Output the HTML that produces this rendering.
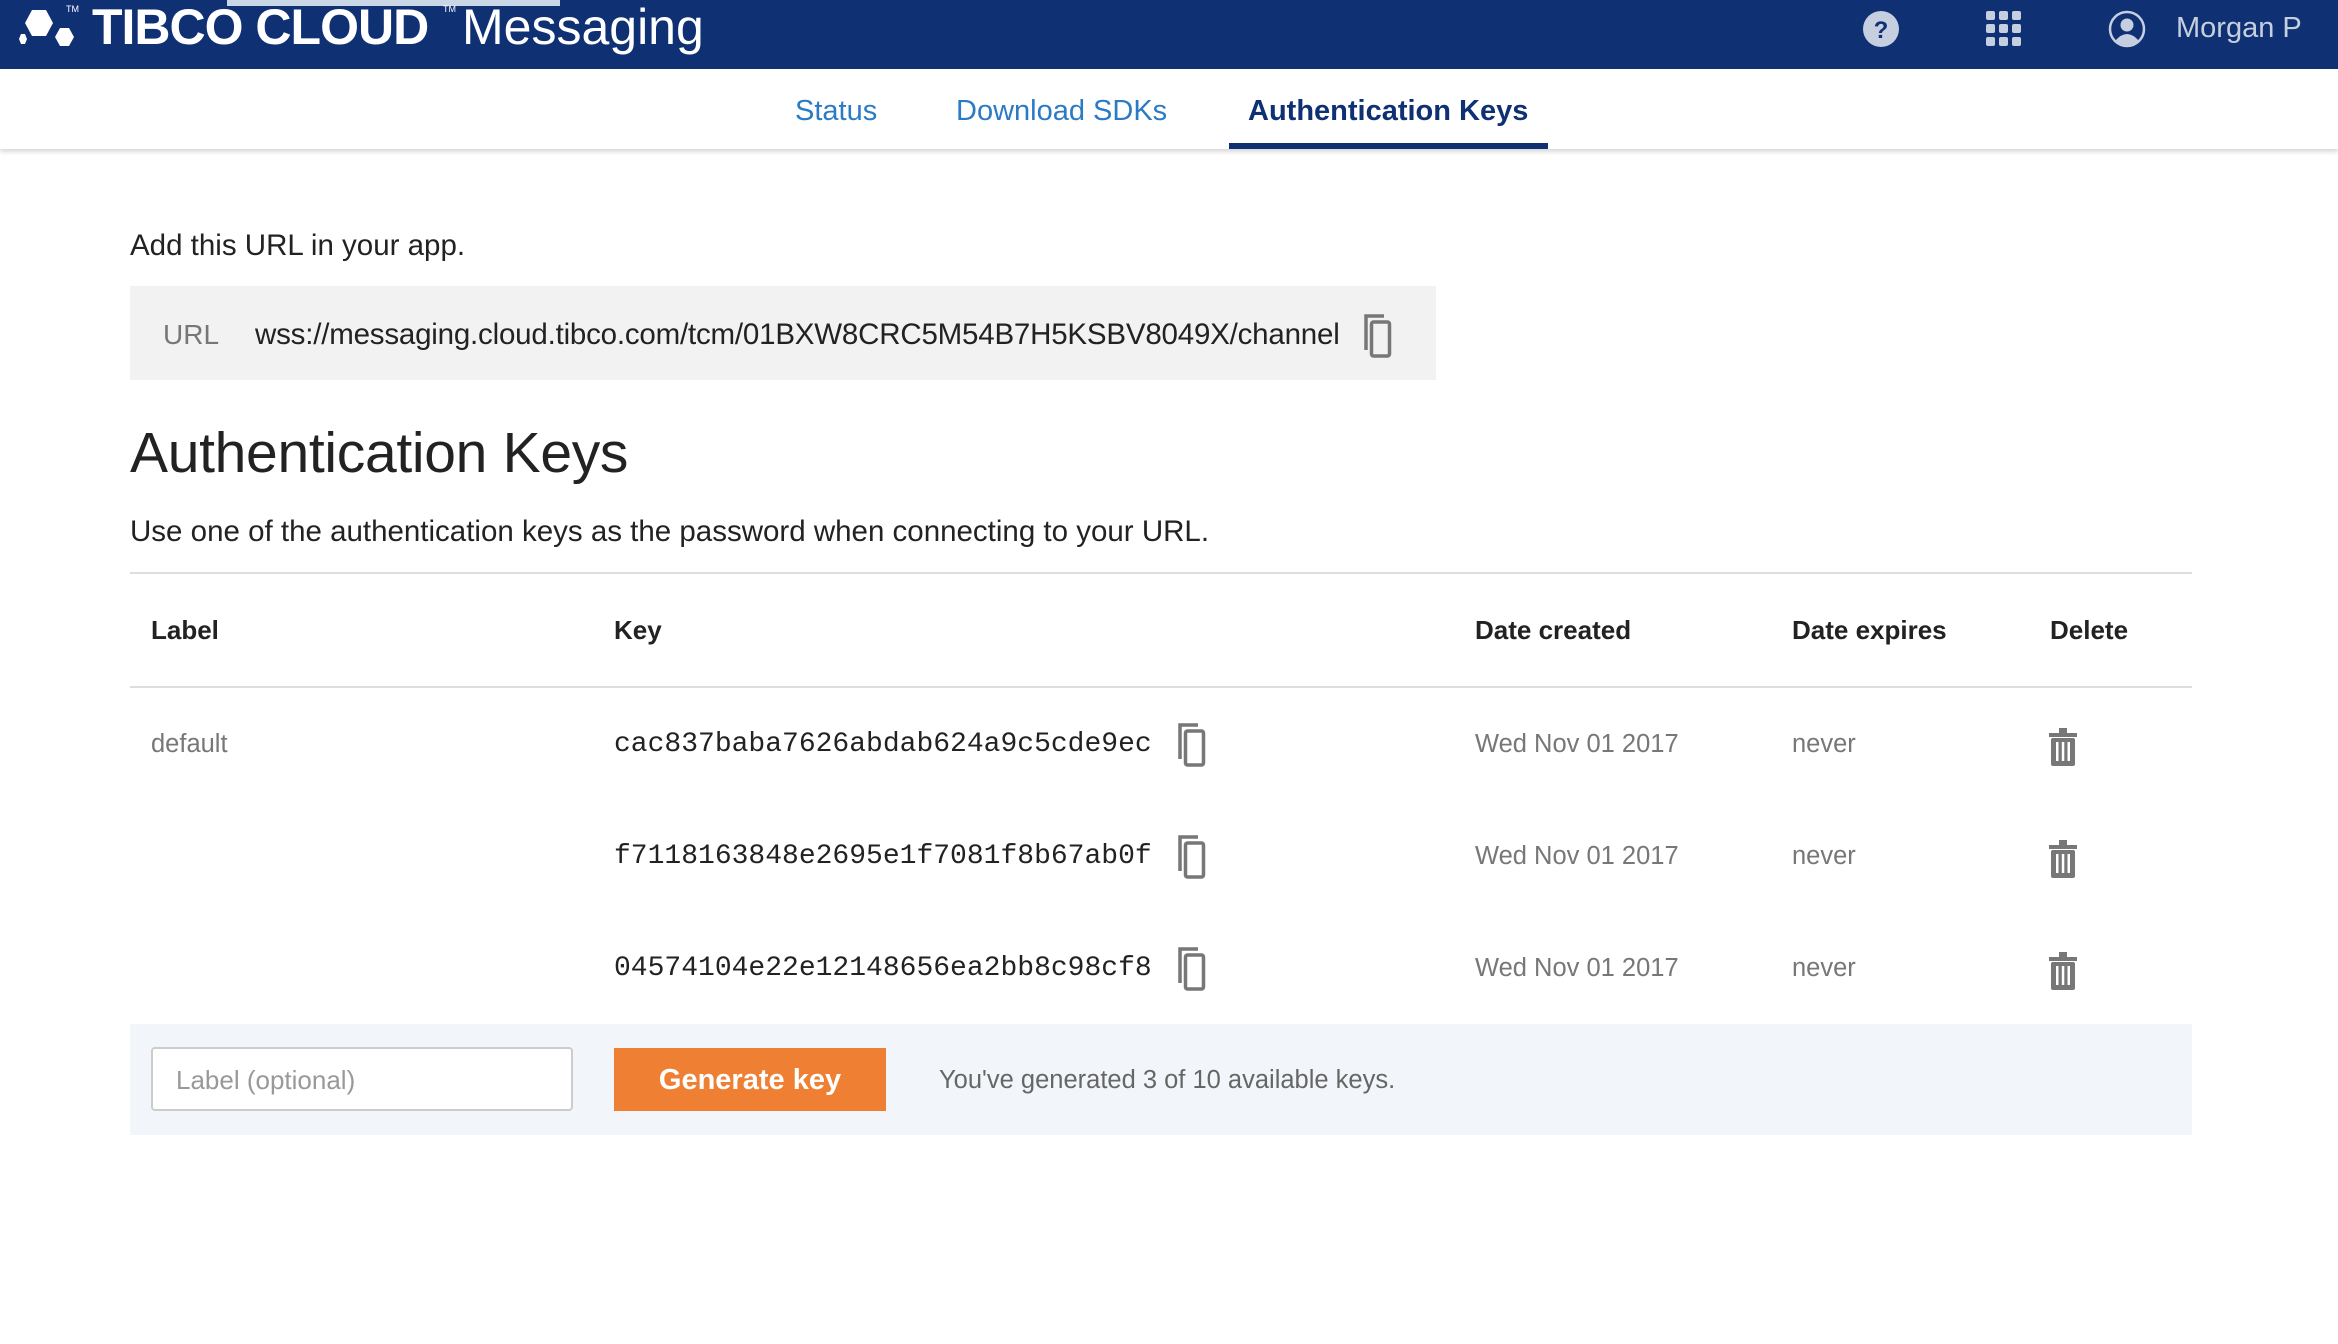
<!DOCTYPE html>
<html><head><meta charset="utf-8"><style>
*{margin:0;padding:0;box-sizing:border-box}
body{width:2338px;height:1344px;background:#fff;font-family:"Liberation Sans",sans-serif;position:relative;overflow:hidden;color:#222}
.a{position:absolute;white-space:nowrap}
.hdr{position:absolute;left:0;top:0;width:2338px;height:69px;background:#0f3174}
.tabs{position:absolute;left:0;top:69px;width:2338px;height:80px;background:#fff;box-shadow:0 3px 4px rgba(0,0,0,.15)}
.tab{font-size:29px;color:#2a7bc4;top:95px}
.mono{font-family:"Liberation Mono",monospace;font-size:28px;color:#222}
.g{color:#777;font-size:25.5px}
.th{font-size:26px;font-weight:bold;color:#222;top:615px}
</style></head><body>
<div class="hdr"></div>
<div class="a" style="left:227px;top:0;width:333px;height:6px;background:#c9d6e6"></div>
<svg class="a" style="left:14px;top:8px" width="70" height="42" viewBox="0 0 70 42">
<polygon points="18,2 32,2 39,15 32,28 18,28 11,15" fill="#fff"/>
<polygon points="46,20 55,20 60,29 55,38 46,38 41,29" fill="#fff"/>
<polygon points="7,26 11,26 13,31 11,36 7,36 5,31" fill="#fff"/>
</svg>
<div class="a" style="left:92px;top:-2px;font-size:50px;color:#fff;font-weight:bold;letter-spacing:-1px">TIBCO CLOUD</div>
<div class="a" style="left:462px;top:-2px;font-size:50px;color:#fff">Messaging</div>
<div class="a" style="left:66px;top:4px;font-size:9px;color:#fff">TM</div>
<div class="a" style="left:443px;top:4px;font-size:9px;color:#fff">TM</div>
<svg class="a" style="left:1862px;top:10px" width="38" height="38"><circle cx="19" cy="19" r="18" fill="#c5cfdf"/><text x="19" y="28" text-anchor="middle" font-family="Liberation Sans" font-weight="bold" font-size="24" fill="#0f3174">?</text></svg>
<svg class="a" style="left:1985px;top:10px" width="38" height="38" fill="#c5cfdf">
<rect x="1" y="1" width="9" height="9" rx="2"/><rect x="14" y="1" width="9" height="9" rx="2"/><rect x="27" y="1" width="9" height="9" rx="2"/>
<rect x="1" y="14" width="9" height="9" rx="2"/><rect x="14" y="14" width="9" height="9" rx="2"/><rect x="27" y="14" width="9" height="9" rx="2"/>
<rect x="1" y="27" width="9" height="9" rx="2"/><rect x="14" y="27" width="9" height="9" rx="2"/><rect x="27" y="27" width="9" height="9" rx="2"/></svg>
<svg class="a" style="left:2107px;top:9px" width="40" height="40"><circle cx="20" cy="20" r="17" fill="none" stroke="#c5cfdf" stroke-width="2.5"/><circle cx="20" cy="16" r="6.5" fill="#c5cfdf"/><path d="M8 32 Q20 18 32 32 Q20 40 8 32Z" fill="#c5cfdf"/></svg>
<div class="a" style="left:2176px;top:12px;font-size:29px;color:#c5cfdf">Morgan P</div>

<div class="tabs"></div>
<div class="a tab" style="left:795px">Status</div>
<div class="a tab" style="left:956px">Download SDKs</div>
<div class="a tab" style="left:1248px;color:#0f3174;font-weight:bold">Authentication Keys</div>
<div class="a" style="left:1229px;top:143px;width:319px;height:6px;background:#0f3174"></div>

<div class="a" style="left:130px;top:229px;font-size:29.5px;color:#222">Add this URL in your app.</div>
<div class="a" style="left:130px;top:286px;width:1306px;height:94px;background:#f2f2f2"></div>
<div class="a" style="left:163px;top:319px;font-size:28px;color:#777">URL</div>
<div class="a" style="left:255px;top:318px;font-size:29.5px;color:#222;letter-spacing:-0.2px">wss://messaging.cloud.tibco.com/tcm/01BXW8CRC5M54B7H5KSBV8049X/channel</div>

<div class="a" style="left:130px;top:420px;font-size:57px;color:#222;letter-spacing:-0.3px">Authentication Keys</div>
<div class="a" style="left:130px;top:515px;font-size:29.5px;color:#222">Use one of the authentication keys as the password when connecting to your URL.</div>
<div class="a" style="left:130px;top:572px;width:2062px;height:2px;background:#ddd"></div>
<div class="a th" style="left:151px">Label</div>
<div class="a th" style="left:614px">Key</div>
<div class="a th" style="left:1475px">Date created</div>
<div class="a th" style="left:1792px">Date expires</div>
<div class="a th" style="left:2050px">Delete</div>
<div class="a" style="left:130px;top:686px;width:2062px;height:2px;background:#ddd"></div>

<div class="a g" style="left:151px;top:730px">default</div>
<div class="a mono" style="left:614px;top:729px">cac837baba7626abdab624a9c5cde9ec</div>
<div class="a mono" style="left:614px;top:841px">f7118163848e2695e1f7081f8b67ab0f</div>
<div class="a mono" style="left:614px;top:953px">04574104e22e12148656ea2bb8c98cf8</div>
<div class="a g" style="left:1475px;top:730px">Wed Nov 01 2017</div>
<div class="a g" style="left:1475px;top:842px">Wed Nov 01 2017</div>
<div class="a g" style="left:1475px;top:954px">Wed Nov 01 2017</div>
<div class="a g" style="left:1792px;top:730px">never</div>
<div class="a g" style="left:1792px;top:842px">never</div>
<div class="a g" style="left:1792px;top:954px">never</div>

<svg width="0" height="0" style="position:absolute"><defs>
<g id="cp"><path d="M2 36 V2 H20" fill="none" stroke="#777" stroke-width="3.5"/><rect x="7.5" y="8" width="18" height="34" rx="2" fill="none" stroke="#777" stroke-width="3.5"/></g>
<g id="tr" fill="#777"><rect x="0" y="6" width="28" height="4"/><rect x="10" y="1" width="8" height="5"/><rect x="2" y="11" width="24" height="28" rx="2"/><rect x="7" y="15" width="2.5" height="19" fill="#fff"/><rect x="12.8" y="15" width="2.5" height="19" fill="#fff"/><rect x="18.5" y="15" width="2.5" height="19" fill="#fff"/></g>
</defs></svg>
<svg class="a" style="left:1364px;top:314px" width="30" height="46"><use href="#cp"/></svg>
<svg class="a" style="left:1178px;top:723px" width="30" height="46"><use href="#cp"/></svg>
<svg class="a" style="left:1178px;top:835px" width="30" height="46"><use href="#cp"/></svg>
<svg class="a" style="left:1178px;top:947px" width="30" height="46"><use href="#cp"/></svg>
<svg class="a" style="left:2049px;top:727px" width="28" height="42"><use href="#tr"/></svg>
<svg class="a" style="left:2049px;top:839px" width="28" height="42"><use href="#tr"/></svg>
<svg class="a" style="left:2049px;top:951px" width="28" height="42"><use href="#tr"/></svg>

<div class="a" style="left:130px;top:1024px;width:2062px;height:111px;background:#f2f6fa"></div>
<div class="a" style="left:151px;top:1047px;width:422px;height:64px;background:#fff;border:2px solid #ccc;border-radius:4px"></div>
<div class="a" style="left:176px;top:1065px;font-size:26px;color:#999">Label (optional)</div>
<div class="a" style="left:614px;top:1048px;width:272px;height:63px;background:#ef7f32"></div>
<div class="a" style="left:614px;top:1064px;width:272px;text-align:center;font-size:29px;color:#fff;font-weight:bold">Generate key</div>
<div class="a" style="left:939px;top:1066px;font-size:25.5px;color:#666">You've generated 3 of 10 available keys.</div>
</body></html>
